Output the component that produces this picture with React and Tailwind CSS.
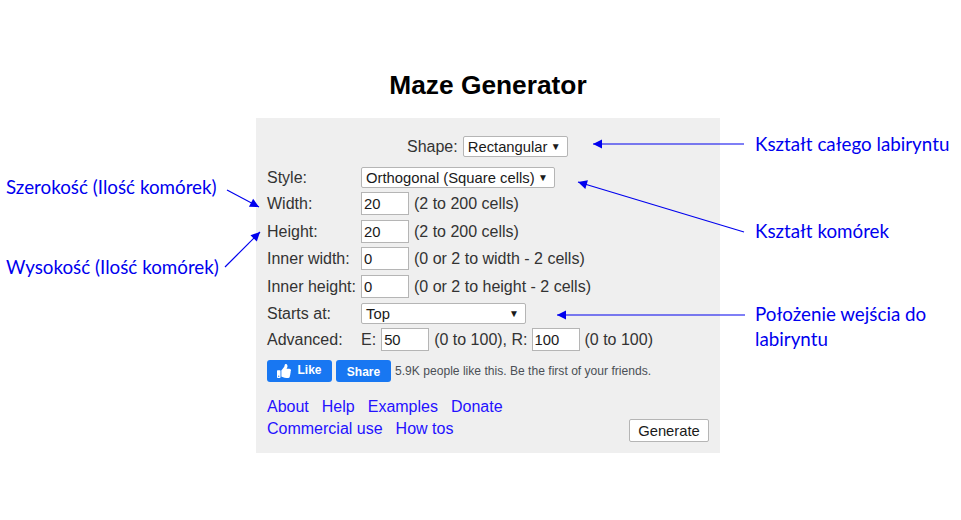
import { FaThumbsUp } from 'react-icons/fa';

const notes = [
   { text: 'Szerokość (Ilość komórek)', className: 'left-[6px] top-[174px]' },
   { text: 'Wysokość (Ilość komórek)', className: 'left-[6px] top-[254px]' },
   { text: 'Kształt całego labiryntu', className: 'left-[755px] top-[131px]' },
   { text: 'Kształt komórek', className: 'left-[755px] top-[218px]' },
   { text: 'Położenie wejścia do', className: 'left-[755px] top-[301px]' },
   { text: 'labiryntu', className: 'left-[755px] top-[326px]' },
];

const arrows = [
   { from: [744, 144], to: [593, 144] },
   { from: [744, 232], to: [578, 182] },
   { from: [745, 315], to: [557, 315] },
   { from: [227, 190], to: [259, 207] },
   { from: [225, 267], to: [260, 232] },
];

function Arrow({ from, to }) {
   const angle = (Math.atan2(to[1] - from[1], to[0] - from[0]) * 180) / Math.PI;

   return (
      <g>
         <line x1={from[0]} y1={from[1]} x2={to[0]} y2={to[1]} stroke="#0000ee" strokeWidth="1.2" />
         <polygon
            points="0,0 -9,-4.5 -9,4.5"
            fill="#0000ee"
            transform={`translate(${to[0]} ${to[1]}) rotate(${angle})`}
         />
      </g>
   );
}

function Dropdown({ label, width }) {
   return (
      <div
         className={`flex h-[21px] ${width} items-center justify-between rounded-[2px] border border-[#b5b5b5] bg-white pl-[4px] pr-[6px] text-[14.8px] text-[#1a1a1a]`}
      >
         <span>{label}</span>
         <span className="text-[10px]">▼</span>
      </div>
   );
}

function NumberInput({ value, width = 'w-[48px]' }) {
   return (
      <input
         defaultValue={value}
         className={`h-[23px] ${width} border border-[#b5b5b5] bg-white px-[2px] text-[14.8px] text-[#1a1a1a] outline-none`}
      />
   );
}

function CellRow({ label, value, hint, className }) {
   return (
      <div className={`flex items-center ${className}`}>
         <span className="w-[94px] shrink-0">{label}</span>
         <NumberInput value={value} />
         <span className="ml-[5px]">{hint}</span>
      </div>
   );
}

function FooterLink({ children }) {
   return <a className="text-[#2411ff]">{children}</a>;
}

function App() {
   return (
      <div className="relative h-[520px] w-[961px] overflow-hidden bg-white font-['Liberation_Sans',Arial,sans-serif]">
         <h1 className="pt-[69px] pl-[15px] text-center text-[26.3px] leading-[32px] font-bold text-black">
            Maze Generator
         </h1>

         <div className="ml-[256px] mt-[17px] h-[335px] w-[464px] bg-[#efefef] pl-[11px] pr-[11px] pt-[18px] text-[16px] leading-[20px] text-[#333]">
            <div className="flex items-center pl-[140px]">
               <span className="mr-[5px]">Shape:</span>
               <Dropdown label="Rectangular" width="w-[105px]" />
            </div>

            <div className="mt-[10px] flex items-center">
               <span className="w-[94px] shrink-0">Style:</span>
               <Dropdown label="Orthogonal (Square cells)" width="w-[194px]" />
            </div>

            <CellRow className="mt-[4px]" label="Width:" value="20" hint="(2 to 200 cells)" />
            <CellRow className="mt-[5px]" label="Height:" value="20" hint="(2 to 200 cells)" />
            <CellRow className="mt-[4px]" label="Inner width:" value="0" hint="(0 or 2 to width - 2 cells)" />
            <CellRow className="mt-[5px]" label="Inner height:" value="0" hint="(0 or 2 to height - 2 cells)" />

            <div className="mt-[5px] flex items-center">
               <span className="w-[94px] shrink-0">Starts at:</span>
               <Dropdown label="Top" width="w-[165px]" />
            </div>

            <div className="mt-[4px] flex items-center">
               <span className="w-[94px] shrink-0">Advanced:</span>
               <span>E:</span>
               <NumberInput value="50" width="w-[48px] ml-[5px]" />
               <span className="ml-[5px]">(0 to 100), R:</span>
               <NumberInput value="100" width="w-[48px] ml-[4px]" />
               <span className="ml-[5px]">(0 to 100)</span>
            </div>

            <div className="mt-[9px] flex items-center">
               <div className="flex h-[22px] w-[65px] items-center justify-center gap-[6px] rounded-[3px] bg-[#1877f2] text-[12px] font-bold text-white">
                  <FaThumbsUp className="text-[14px]" />
                  <span className="-translate-y-px">Like</span>
               </div>
               <div className="ml-[4px] flex h-[22px] w-[55px] items-center justify-center rounded-[3px] bg-[#1877f2] text-[12px] font-bold text-white">
                  <span className="translate-y-px">Share</span>
               </div>
               <span className="ml-[4px] text-[12.1px] text-[#4b4f56]">
                  5.9K people like this. Be the first of your friends.
               </span>
            </div>

            <div className="mt-[14px] flex items-start justify-between">
               <div>
                  <div className="flex h-[22px] items-center gap-[13px]">
                     <FooterLink>About</FooterLink>
                     <FooterLink>Help</FooterLink>
                     <FooterLink>Examples</FooterLink>
                     <FooterLink>Donate</FooterLink>
                  </div>
                  <div className="flex h-[22px] items-center gap-[13px]">
                     <FooterLink>Commercial use</FooterLink>
                     <FooterLink>How tos</FooterLink>
                  </div>
               </div>
               <button className="mt-[23px] h-[23px] w-[80px] rounded-[2px] border border-[#b5b5b5] bg-white text-[14.8px] text-[#1a1a1a]">
                  Generate
               </button>
            </div>
         </div>

         {/* annotations drawn over the page */}
         <svg className="pointer-events-none absolute left-0 top-0" width="961" height="520">
            {arrows.map((arrow, i) => (
               <Arrow key={i} from={arrow.from} to={arrow.to} />
            ))}
         </svg>
         {notes.map(note => (
            <span
               key={note.text}
               className={`absolute whitespace-nowrap font-['Lato',sans-serif] text-[18.8px] leading-[25px] text-[#0000ee] ${note.className}`}
            >
               {note.text}
            </span>
         ))}
      </div>
   );
}

export default App;
